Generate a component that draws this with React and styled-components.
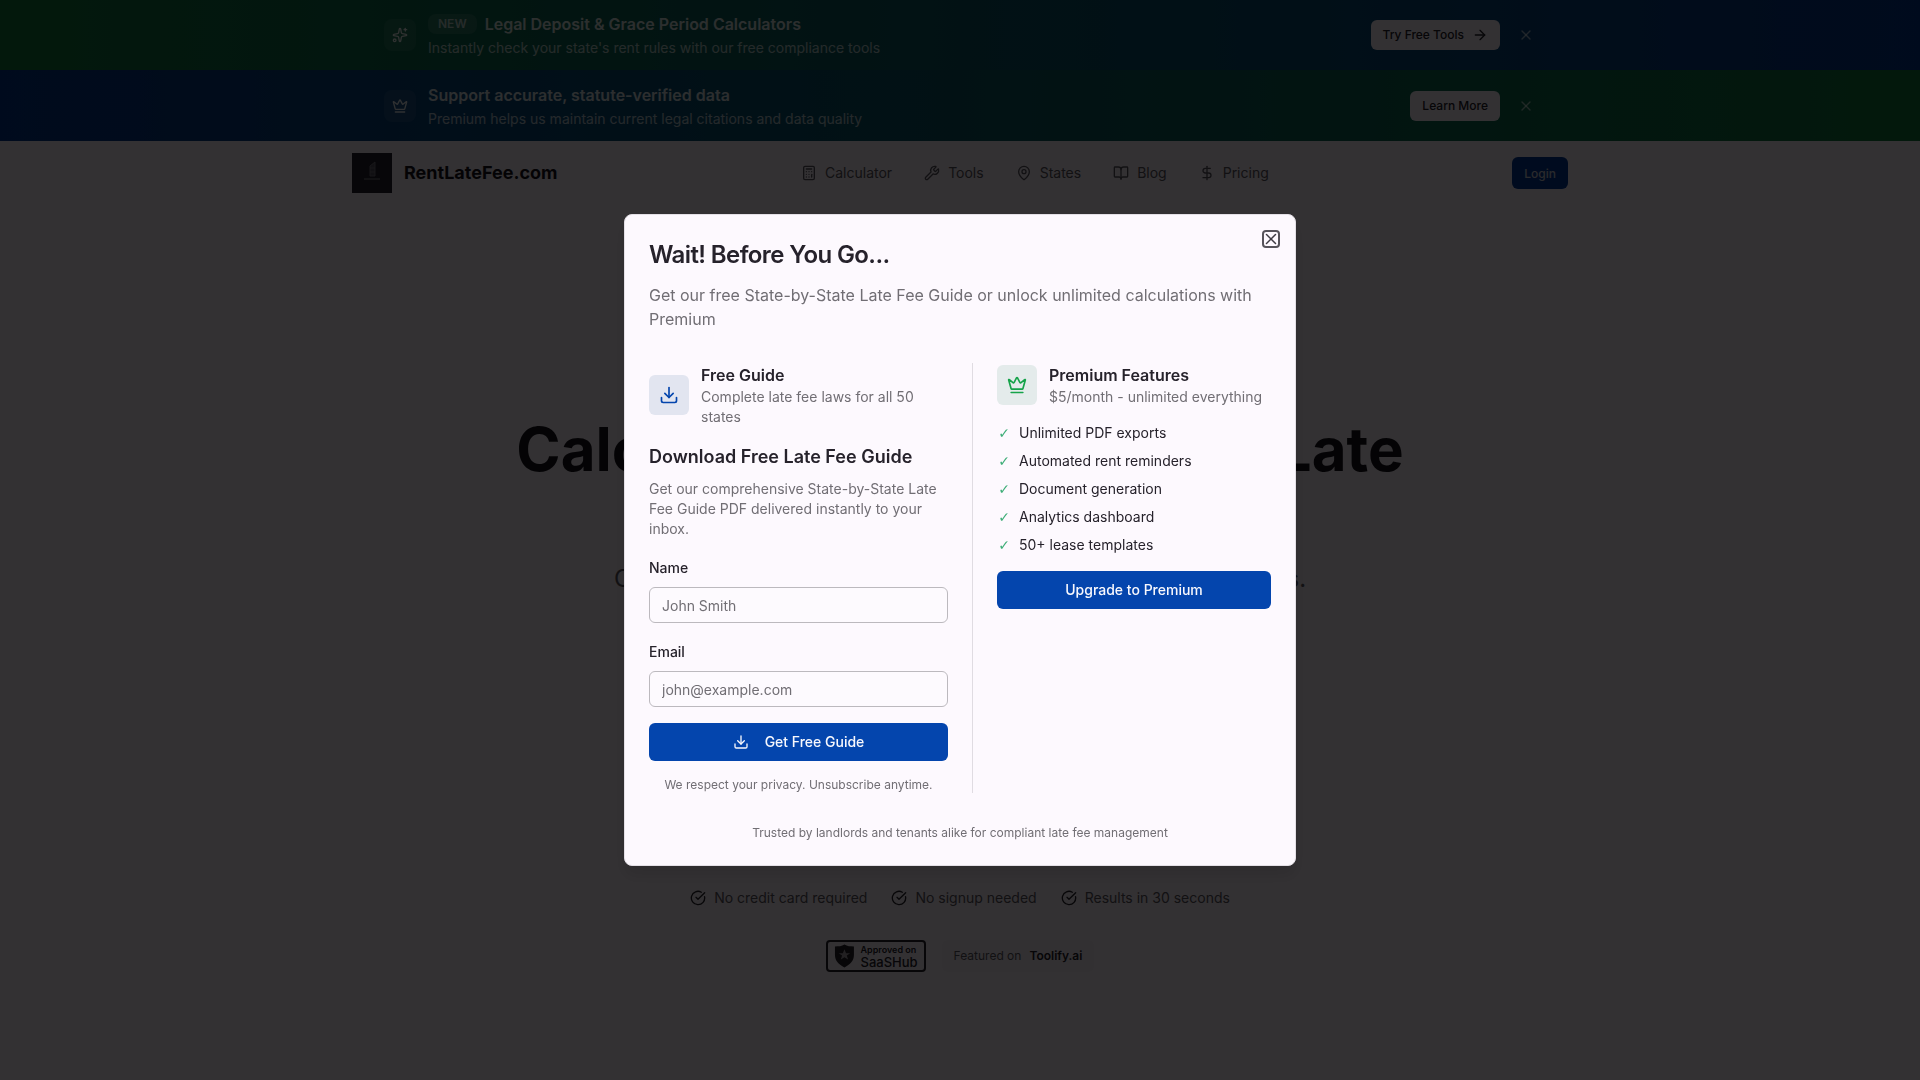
import React from "react";
import styled, { createGlobalStyle } from "styled-components";
import {
  ArrowRight,
  BookOpen,
  Calculator,
  CircleCheckBig,
  Crown,
  DollarSign,
  Download,
  MapPin,
  Sparkles,
  Wrench,
  X,
} from "lucide-react";

const GlobalStyle = createGlobalStyle`
  *, *::before, *::after { box-sizing: border-box; }
  body {
    margin: 0;
    background: #fff5ff;
    color: #26222b;
    font-family: Inter, "Liberation Sans", sans-serif;
    font-size: 16px;
    line-height: 24px;
  }
  h1, h2, h3, h4, p, ul { margin: 0; padding: 0; }
  button, input { font-family: inherit; }
`;

const Page = styled.div`
  min-height: 100vh;
`;

const Banner = styled.aside`
  background: linear-gradient(90deg, ${(p) => p.$from}, ${(p) => p.$to});
  color: #ffffff;

  & + & { border-top: 1px solid transparent; }
`;

const Container = styled.div`
  display: flex;
  align-items: center;
  justify-content: space-between;
  max-width: 1280px;
  margin: 0 auto;
  padding: ${(p) => p.$padding};
`;

const Row = styled.div`
  display: flex;
  align-items: center;
  gap: ${(p) => p.$gap}px;
`;

const BannerIcon = styled.span`
  display: grid;
  place-items: center;
  width: 32px;
  height: 32px;
  border-radius: 8px;
  background: rgba(255, 255, 255, 0.08);
  color: rgba(255, 255, 255, 0.9);
`;

const BannerTitle = styled.p`
  font-size: 16px;
  font-weight: 600;
  line-height: 24px;
  opacity: 0.85;
`;

const BannerText = styled.p`
  margin-top: 2px;
  font-size: 14px;
  line-height: 20px;
  opacity: 0.7;
`;

const NewBadge = styled.span`
  padding: 2px 10px;
  border-radius: 8px;
  background: rgba(255, 255, 255, 0.12);
  color: rgba(255, 255, 255, 0.7);
  font-size: 12px;
  font-weight: 600;
  line-height: 16px;
`;

const BannerButton = styled.button`
  display: flex;
  align-items: center;
  gap: 8px;
  height: 30px;
  padding: 0 12px;
  border: 0;
  border-radius: 6px;
  background: #fff5ff;
  color: #26222b;
  font-size: 12px;
  font-weight: 500;
  line-height: 16px;
`;

const DismissButton = styled.button`
  display: grid;
  place-items: center;
  width: 20px;
  height: 20px;
  padding: 0;
  border: 0;
  background: transparent;
  color: rgba(255, 255, 255, 0.6);
`;

const Logo = styled.svg`
  display: block;
  width: 40px;
  height: 40px;
`;

const Brand = styled.a`
  display: flex;
  align-items: center;
  gap: 12px;
  color: #17131c;
  font-size: 18px;
  font-weight: 700;
  line-height: 28px;
  text-decoration: none;
`;

const Nav = styled.nav`
  display: flex;
  align-items: center;
  gap: 32px;
`;

const NavLink = styled.a`
  display: flex;
  align-items: center;
  gap: 8px;
  color: #5c5762;
  font-size: 14px;
  line-height: 20px;
  text-decoration: none;
`;

const LoginButton = styled.button`
  height: 32px;
  padding: 0 12px;
  border: 0;
  border-radius: 6px;
  background: #043a9a;
  color: #d0d0dc;
  font-size: 12px;
  font-weight: 500;
`;

const Hero = styled.main`
  padding: 214px 32px 48px;
  text-align: center;
`;

const HeroTitle = styled.h1`
  font-size: 60px;
  font-weight: 700;
  line-height: 60px;
  color: #17131c;
`;

const HeroText = styled.p`
  margin-top: 84px;
  font-size: 24px;
  line-height: 32px;
  color: #5c5762;
`;

const TrustRow = styled.ul`
  display: flex;
  justify-content: center;
  gap: 24px;
  margin-top: 293px;
  list-style: none;
`;

const TrustItem = styled.li`
  display: flex;
  align-items: center;
  gap: 8px;
  color: #5c5762;
  font-size: 14px;
  line-height: 20px;

  svg { color: #26222b; }
`;

const BadgeRow = styled.div`
  display: flex;
  align-items: center;
  justify-content: center;
  gap: 16px;
  margin-top: 32px;
`;

const SaasBadge = styled.a`
  display: flex;
  align-items: center;
  gap: 6px;
  width: 100px;
  height: 32px;
  padding: 0 6px;
  border: 2px solid #26222b;
  border-radius: 4px;
  color: #26222b;
  text-align: left;
  text-decoration: none;
`;

const SaasSmall = styled.span`
  display: block;
  font-size: 9px;
  font-weight: 600;
  line-height: 12px;
  white-space: nowrap;
`;

const SaasName = styled.span`
  display: block;
  font-size: 13px;
  font-weight: 500;
  line-height: 12px;
`;

const FeaturedBadge = styled.a`
  display: flex;
  gap: 8px;
  padding: 8px 12px;
  border-radius: 6px;
  background: #faf0fa;
  color: #5c5762;
  font-size: 12px;
  line-height: 16px;
  text-decoration: none;

  strong { color: #26222b; font-weight: 600; }
`;

const Overlay = styled.div`
  position: fixed;
  inset: 0;
  display: grid;
  place-items: center;
  background: rgba(0, 0, 0, 0.8);
`;

const Dialog = styled.section`
  position: relative;
  width: 100%;
  max-width: 672px;
  padding: 24px;
  border: 1px solid #e4e0e6;
  border-radius: 8px;
  background: #fdf9fe;
  box-shadow: 0 10px 15px rgba(0, 0, 0, 0.1);
`;

const CloseButton = styled.button`
  position: absolute;
  top: 15px;
  right: 15px;
  display: grid;
  place-items: center;
  width: 18px;
  height: 18px;
  padding: 0;
  border: 0;
  border-radius: 4px;
  background: transparent;
  box-shadow: inset 0 0 0 2px #57545b;
  color: #3f3c43;
`;

const DialogTitle = styled.h2`
  font-size: 24px;
  font-weight: 600;
  line-height: 32px;
  letter-spacing: -0.025em;
`;

const DialogText = styled.p`
  margin-top: 12px;
  color: #716e74;
  font-size: 16px;
  line-height: 24px;
`;

const Columns = styled.div`
  display: grid;
  grid-template-columns: 1fr 1fr;
  gap: 24px;
  margin-top: 32px;
`;

const Column = styled.div`
  display: flex;
  flex-direction: column;
  gap: 16px;
  padding-left: ${(p) => (p.$divided ? 24 : 0)}px;
  border-left: ${(p) => (p.$divided ? "1px solid #e0dce2" : "0")};
`;

const IconTile = styled.span`
  display: grid;
  flex: none;
  place-items: center;
  width: 40px;
  height: 40px;
  border-radius: 6px;
  background: ${(p) => p.$background};
  color: ${(p) => p.$color};
`;

const OfferTitle = styled.h3`
  font-size: 16px;
  font-weight: 600;
  line-height: 24px;
`;

const Muted = styled.p`
  color: #716e74;
  font-size: 14px;
  line-height: 20px;
`;

const Form = styled.form`
  display: flex;
  flex-direction: column;
  gap: 16px;
`;

const FormTitle = styled.h4`
  margin-bottom: 8px;
  font-size: 18px;
  font-weight: 600;
  line-height: 28px;
`;

const Label = styled.label`
  display: block;
  padding-top: 2px;
  margin-bottom: 8px;
  font-size: 14px;
  font-weight: 500;
  line-height: 22px;
`;

const Input = styled.input`
  display: block;
  width: 100%;
  height: 36px;
  padding: 0 12px;
  border: 1px solid #bcb9be;
  border-radius: 6px;
  background: #fdfafe;
  color: #26222b;
  font-size: 14px;

  &::placeholder { color: #716e74; opacity: 1; }
`;

const PrimaryButton = styled.button`
  display: flex;
  align-items: center;
  justify-content: center;
  gap: 16px;
  width: 100%;
  height: 38px;
  padding: 0 16px;
  border: 0;
  border-radius: 6px;
  background: #0445ad;
  color: #f8f8fd;
  font-size: 14px;
  font-weight: 500;
  line-height: 20px;
`;

const FinePrint = styled.p`
  margin-top: ${(p) => p.$top || 0}px;
  color: #716e74;
  font-size: 12px;
  line-height: 16px;
  text-align: center;
`;

const FeatureList = styled.ul`
  display: flex;
  flex-direction: column;
  gap: 8px;
  list-style: none;
`;

const Feature = styled.li`
  display: flex;
  gap: 8px;
  font-size: 14px;
  line-height: 20px;
`;

const Check = styled.span`
  width: 14px;
  color: #3fae78;
  font-family: "DejaVu Sans", sans-serif;
  text-align: center;
`;

const navItems = [
  ["Calculator", Calculator],
  ["Tools", Wrench],
  ["States", MapPin],
  ["Blog", BookOpen],
  ["Pricing", DollarSign],
];

const trustItems = ["No credit card required", "No signup needed", "Results in 30 seconds"];

const features = [
  "Unlimited PDF exports",
  "Automated rent reminders",
  "Document generation",
  "Analytics dashboard",
  "50+ lease templates",
];

function PromoBanner({ from, to, icon: Icon, badge, title, text, action, arrow }) {
  return (
    <Banner $from={from} $to={to}>
      <Container $padding="12px 64px">
        <Row $gap={12}>
          <BannerIcon><Icon size={16} /></BannerIcon>
          <div>
            <Row $gap={8}>
              {badge && <NewBadge>{badge}</NewBadge>}
              <BannerTitle>{title}</BannerTitle>
            </Row>
            <BannerText>{text}</BannerText>
          </div>
        </Row>
        <Row $gap={16}>
          <BannerButton type="button">
            {action}
            {arrow && <ArrowRight size={16} />}
          </BannerButton>
          <DismissButton type="button" aria-label="Dismiss"><X size={16} /></DismissButton>
        </Row>
      </Container>
    </Banner>
  );
}

export default function App() {
  return (
    <>
      <GlobalStyle />
      <Page>
        <PromoBanner
          from="#107a3c"
          to="#043690"
          icon={Sparkles}
          badge="NEW"
          title="Legal Deposit & Grace Period Calculators"
          text="Instantly check your state's rent rules with our free compliance tools"
          action="Try Free Tools"
          arrow
        />
        <PromoBanner
          from="#043690"
          to="#107a3c"
          icon={Crown}
          title="Support accurate, statute-verified data"
          text="Premium helps us maintain current legal citations and data quality"
          action="Learn More"
        />
        <header>
          <Container $padding="12px 32px">
            <Brand href="#">
              <Logo viewBox="0 0 40 40" aria-hidden="true">
                <rect width="40" height="40" fill="#24222e" />
                <path d="M12 26h16" stroke="#8d8796" strokeWidth="1" />
                <path d="M18 23V13l5-4v14zM18 15h5M18 19h5" stroke="#77717f" fill="#55505e" />
              </Logo>
              RentLateFee.com
            </Brand>
            <Nav>
              {navItems.map(([name, Icon]) => (
                <NavLink href="#" key={name}><Icon size={16} />{name}</NavLink>
              ))}
            </Nav>
            <LoginButton type="button">Login</LoginButton>
          </Container>
        </header>
        <Hero>
          <HeroTitle>Calculate Your Legal Rent Late</HeroTitle>
          <HeroText>Calculate legally compliant late fees across all 50 U.S. states.</HeroText>
          <TrustRow>
            {trustItems.map((item) => (
              <TrustItem key={item}><CircleCheckBig size={16} />{item}</TrustItem>
            ))}
          </TrustRow>
          <BadgeRow>
            <SaasBadge href="#">
              <svg width="22" height="26" viewBox="0 0 22 26" aria-hidden="true">
                <path d="M11 1c3 2 6 2 10 2v9c0 6-4 10-10 13C5 22 1 18 1 12V3c4 0 7 0 10-2z" fill="#26222b" />
                <path d="M11 6l1.700 4h4.300l-3.500 2.600 1.300 4.200L11 14.200l-3.800 2.600 1.300-4.200L5 10h4.300z" fill="#a8a0aa" />
              </svg>
              <span>
                <SaasSmall>Approved on</SaasSmall>
                <SaasName>SaaSHub</SaasName>
              </span>
            </SaasBadge>
            <FeaturedBadge href="#">Featured on <strong>Toolify.ai</strong></FeaturedBadge>
          </BadgeRow>
        </Hero>
      </Page>
      <Overlay>
        <Dialog role="dialog" aria-modal="true" aria-labelledby="dialog-title">
          <DialogTitle id="dialog-title">Wait! Before You Go...</DialogTitle>
          <DialogText>
            Get our free State-by-State Late Fee Guide or unlock unlimited calculations with Premium
          </DialogText>
          <Columns>
            <Column>
              <Row $gap={12}>
                <IconTile $background="#e2e5f0" $color="#0445ad"><Download size={20} /></IconTile>
                <div>
                  <OfferTitle>Free Guide</OfferTitle>
                  <Muted>Complete late fee laws for all 50 states</Muted>
                </div>
              </Row>
              <Form onSubmit={(e) => e.preventDefault()}>
                <div>
                  <FormTitle>Download Free Late Fee Guide</FormTitle>
                  <Muted>
                    Get our comprehensive State-by-State Late Fee Guide PDF delivered instantly to your inbox.
                  </Muted>
                </div>
                <div>
                  <Label htmlFor="name">Name</Label>
                  <Input id="name" type="text" placeholder="John Smith" />
                </div>
                <div>
                  <Label htmlFor="email">Email</Label>
                  <Input id="email" type="email" placeholder="john@example.com" />
                </div>
                <PrimaryButton type="submit"><Download size={16} />Get Free Guide</PrimaryButton>
                <FinePrint>We respect your privacy. Unsubscribe anytime.</FinePrint>
              </Form>
            </Column>
            <Column $divided>
              <Row $gap={12}>
                <IconTile $background="#e4ebeb" $color="#16a34a"><Crown size={20} /></IconTile>
                <div>
                  <OfferTitle>Premium Features</OfferTitle>
                  <Muted>$5/month - unlimited everything</Muted>
                </div>
              </Row>
              <FeatureList>
                {features.map((feature) => (
                  <Feature key={feature}><Check>✓</Check>{feature}</Feature>
                ))}
              </FeatureList>
              <PrimaryButton type="button">Upgrade to Premium</PrimaryButton>
            </Column>
          </Columns>
          <FinePrint $top={32}>
            Trusted by landlords and tenants alike for compliant late fee management
          </FinePrint>
          <CloseButton type="button" aria-label="Close"><X size={18} /></CloseButton>
        </Dialog>
      </Overlay>
    </>
  );
}
